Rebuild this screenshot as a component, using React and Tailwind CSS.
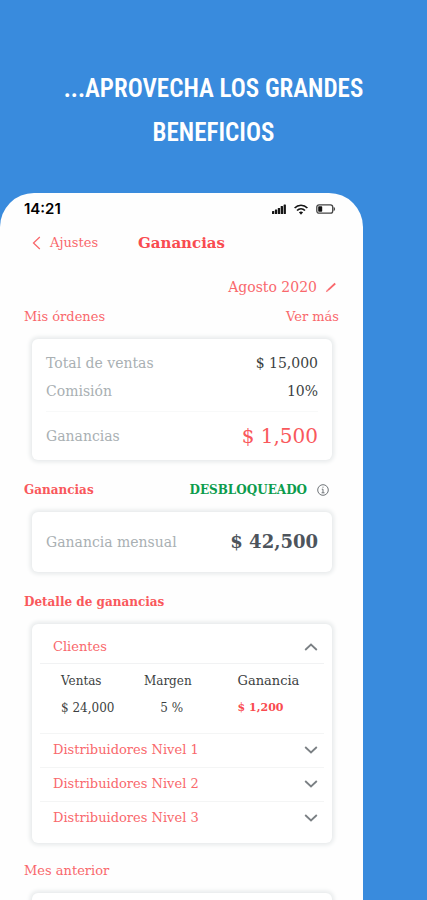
import { useState } from "react";

function Chevron({ up }) {
  return (
    <svg
      viewBox="0 0 14 8"
      className={up ? "h-2 w-3.5" : "h-2 w-3.5 rotate-180"}
      fill="none"
      stroke="#7b8084"
      strokeWidth="1.800"
      aria-hidden="true"
    >
      <path d="M1.2 7 7 1.5 12.8 7" />
    </svg>
  );
}

function StatusBar() {
  return (
    <div className="flex h-8 items-center justify-between pr-[27px] pl-6 font-['Inter',sans-serif]">
      <span className="text-[15px] font-semibold text-black">14:21</span>
      <span className="flex items-center gap-2">
        <svg viewBox="0 0 14 10" className="h-2.5 w-3.5" fill="#151515" aria-hidden="true">
          <rect x="0" y="7" width="2.300" height="3" rx=".5" />
          <rect x="2.900" y="5.500" width="2.300" height="4.500" rx=".5" />
          <rect x="5.800" y="4" width="2.300" height="6" rx=".5" />
          <rect x="8.700" y="2" width="2.300" height="8" rx=".5" />
          <rect x="11.600" y="0.500" width="2.300" height="9.500" rx=".5" />
        </svg>
        <svg viewBox="0 0 14 11" className="h-[11px] w-3.5" fill="none" stroke="#151515" strokeWidth="1.7" aria-hidden="true">
          <path d="M.6 4C4.2.3 9.800.3 13.400 4" />
          <path d="M3 6.500c2.300-2.200 5.700-2.200 8 0" />
          <path d="M4.900 8.200 7 10.800l2.100-2.600c-1.300-1-2.900-1-4.200 0Z" fill="#151515" stroke="none" />
        </svg>
        <svg viewBox="0 0 20 10" className="h-2.5 w-5" aria-hidden="true">
          <rect x=".8" y=".8" width="15.900" height="8.400" rx="2.200" fill="none" stroke="#444" strokeWidth="1.300" />
          <rect x="2.200" y="2.200" width="4" height="5.600" rx=".8" fill="#111" />
          <path d="M17.600 2.800c2 .8 2 3.600 0 4.400Z" fill="#444" />
        </svg>
      </span>
    </div>
  );
}

function Card({ className = "", children }) {
  return (
    <div className={`mr-[31px] ml-8 rounded-md bg-white shadow-[0_0_4px_2px_#e6e9ea] ${className}`}>
      {children}
    </div>
  );
}

function Level({ name, open, onToggle }) {
  return (
    <button
      type="button"
      aria-expanded={open}
      onClick={onToggle}
      className="flex h-[33px] w-full items-center justify-between pr-1.5 pl-[13px] text-[#f9686c]"
    >
      {name}
      <Chevron up={open} />
    </button>
  );
}

const levels = ["Distribuidores Nivel 1", "Distribuidores Nivel 2", "Distribuidores Nivel 3"];

export default function App() {
  const [open, setOpen] = useState("Clientes");
  const toggle = (name) => setOpen(open === name ? "" : name);

  return (
    <div className="flex h-screen flex-col overflow-hidden bg-[#398bdd] font-['DejaVu_Serif',serif] text-[13px] leading-5">
      <h1 className="px-14 pt-[67px] pb-[38px] text-center font-['Liberation_Sans_Narrow','Roboto_Condensed','DejaVu_Sans_Condensed',sans-serif] text-[25px] leading-[44px] font-semibold text-white">
        ...APROVECHA LOS GRANDES BENEFICIOS
      </h1>

      <main className="mr-16 min-h-0 flex-1 overflow-hidden rounded-t-[34px] bg-[#fefefe]">
        <StatusBar />

        <header className="grid h-9 grid-cols-[1fr_auto_1fr] items-center px-8">
          <a href="#ajustes" className="flex items-center gap-[9px] text-[#f9686c]">
            <svg viewBox="0 0 9 14" className="h-3.5 w-[9px]" fill="none" stroke="currentColor" strokeWidth="1.300" aria-hidden="true">
              <path d="M7.800 1 1.500 7l6.300 6" />
            </svg>
            Ajustes
          </a>
          <h2 className="text-[15px] font-bold text-[#f94b50]">Ganancias</h2>
        </header>

        <div className="mt-4 flex justify-end pr-[26px]">
          <button type="button" className="flex items-center gap-2 text-sm leading-5 text-[#f9686c]">
            Agosto 2020
            <svg viewBox="0 0 12 12" className="size-3" aria-hidden="true">
              <path d="M3 9.200 10.200 2.500" stroke="#f9686c" strokeWidth="1.800" />
              <path d="m.8 11.200 1.200-2.600 1.500 1.500Z" fill="#f9686c" />
            </svg>
          </button>
        </div>

        <div className="mt-2.5 flex justify-between px-6 text-[#f9686c]">
          <h3>Mis órdenes</h3>
          <a href="#ordenes">Ver más</a>
        </div>

        <Card className="mt-3 px-3.5 pt-3.5 pb-2">
          <dl className="text-sm leading-5 text-[#a9b0b3]">
            <div className="flex items-center justify-between">
              <dt>Total de ventas</dt>
              <dd className="text-[#3c3f42]">$ 15,000</dd>
            </div>
            <div className="mt-2 flex items-center justify-between border-b border-[#f8f9f9] pb-2.5">
              <dt>Comisión</dt>
              <dd className="text-[#3c3f42]">10%</dd>
            </div>
            <div className="mt-2 flex h-8 items-center justify-between">
              <dt>Ganancias</dt>
              <dd className="text-xl text-[#f9585c]">$ 1,500</dd>
            </div>
          </dl>
        </Card>

        <div className="mt-5 flex items-center justify-between pr-[34px] pl-6 text-xs leading-5 font-bold">
          <h3 className="text-[#f9585c]">Ganancias</h3>
          <span className="flex items-center gap-2.5 text-[#0b9c4c]">
            DESBLOQUEADO
            <svg viewBox="0 0 12 12" className="size-3" fill="none" stroke="#6f7478" strokeWidth="1" aria-hidden="true">
              <circle cx="6" cy="6" r="5.300" />
              <path d="M4.800 5.200H6v3.600M4.600 8.800h2.900M5.500 3.200h1" />
            </svg>
          </span>
        </div>

        <Card className="mt-3 flex h-[60px] items-center justify-between px-3.5">
          <span className="text-sm text-[#a9b0b3]">Ganancia mensual</span>
          <strong className="text-lg font-bold text-[#4d545c]">$ 42,500</strong>
        </Card>

        <h3 className="mt-5 pl-6 text-xs leading-5 font-bold text-[#f9585c]">Detalle de ganancias</h3>

        <Card className="mt-3 px-2 pt-1.5 pb-2">
          <Level name="Clientes" open={open === "Clientes"} onToggle={() => toggle("Clientes")} />
          {open === "Clientes" && (
            <table className="w-full table-fixed border-t border-[#f1f2f3] text-left text-xs text-[#3c3f42]">
              <thead>
                <tr className="h-[34px]">
                  <th className="w-[31%] pl-[21px] font-normal">Ventas</th>
                  <th className="w-[28%] text-center font-normal">Margen</th>
                  <th className="pl-[30px] text-[13px] font-normal">Ganancia</th>
                </tr>
              </thead>
              <tbody>
                <tr className="h-[35px] align-top">
                  <td className="pt-0.5 pl-[21px] whitespace-nowrap">$ 24,000</td>
                  <td className="pt-0.5 pl-2 text-center">5 %</td>
                  <td className="pt-0.5 pl-[30px] text-[11px] leading-4 font-bold text-[#f94b50]">$ 1,200</td>
                </tr>
              </tbody>
            </table>
          )}
          {levels.map((name) => (
            <div key={name} className="border-t border-[#f4f5f5]">
              <Level name={name} open={open === name} onToggle={() => toggle(name)} />
            </div>
          ))}
        </Card>

        <h3 className="mt-[18px] pl-6 text-[#f9686c]">Mes anterior</h3>
        <Card className="mt-3 h-32" />
      </main>
    </div>
  );
}
